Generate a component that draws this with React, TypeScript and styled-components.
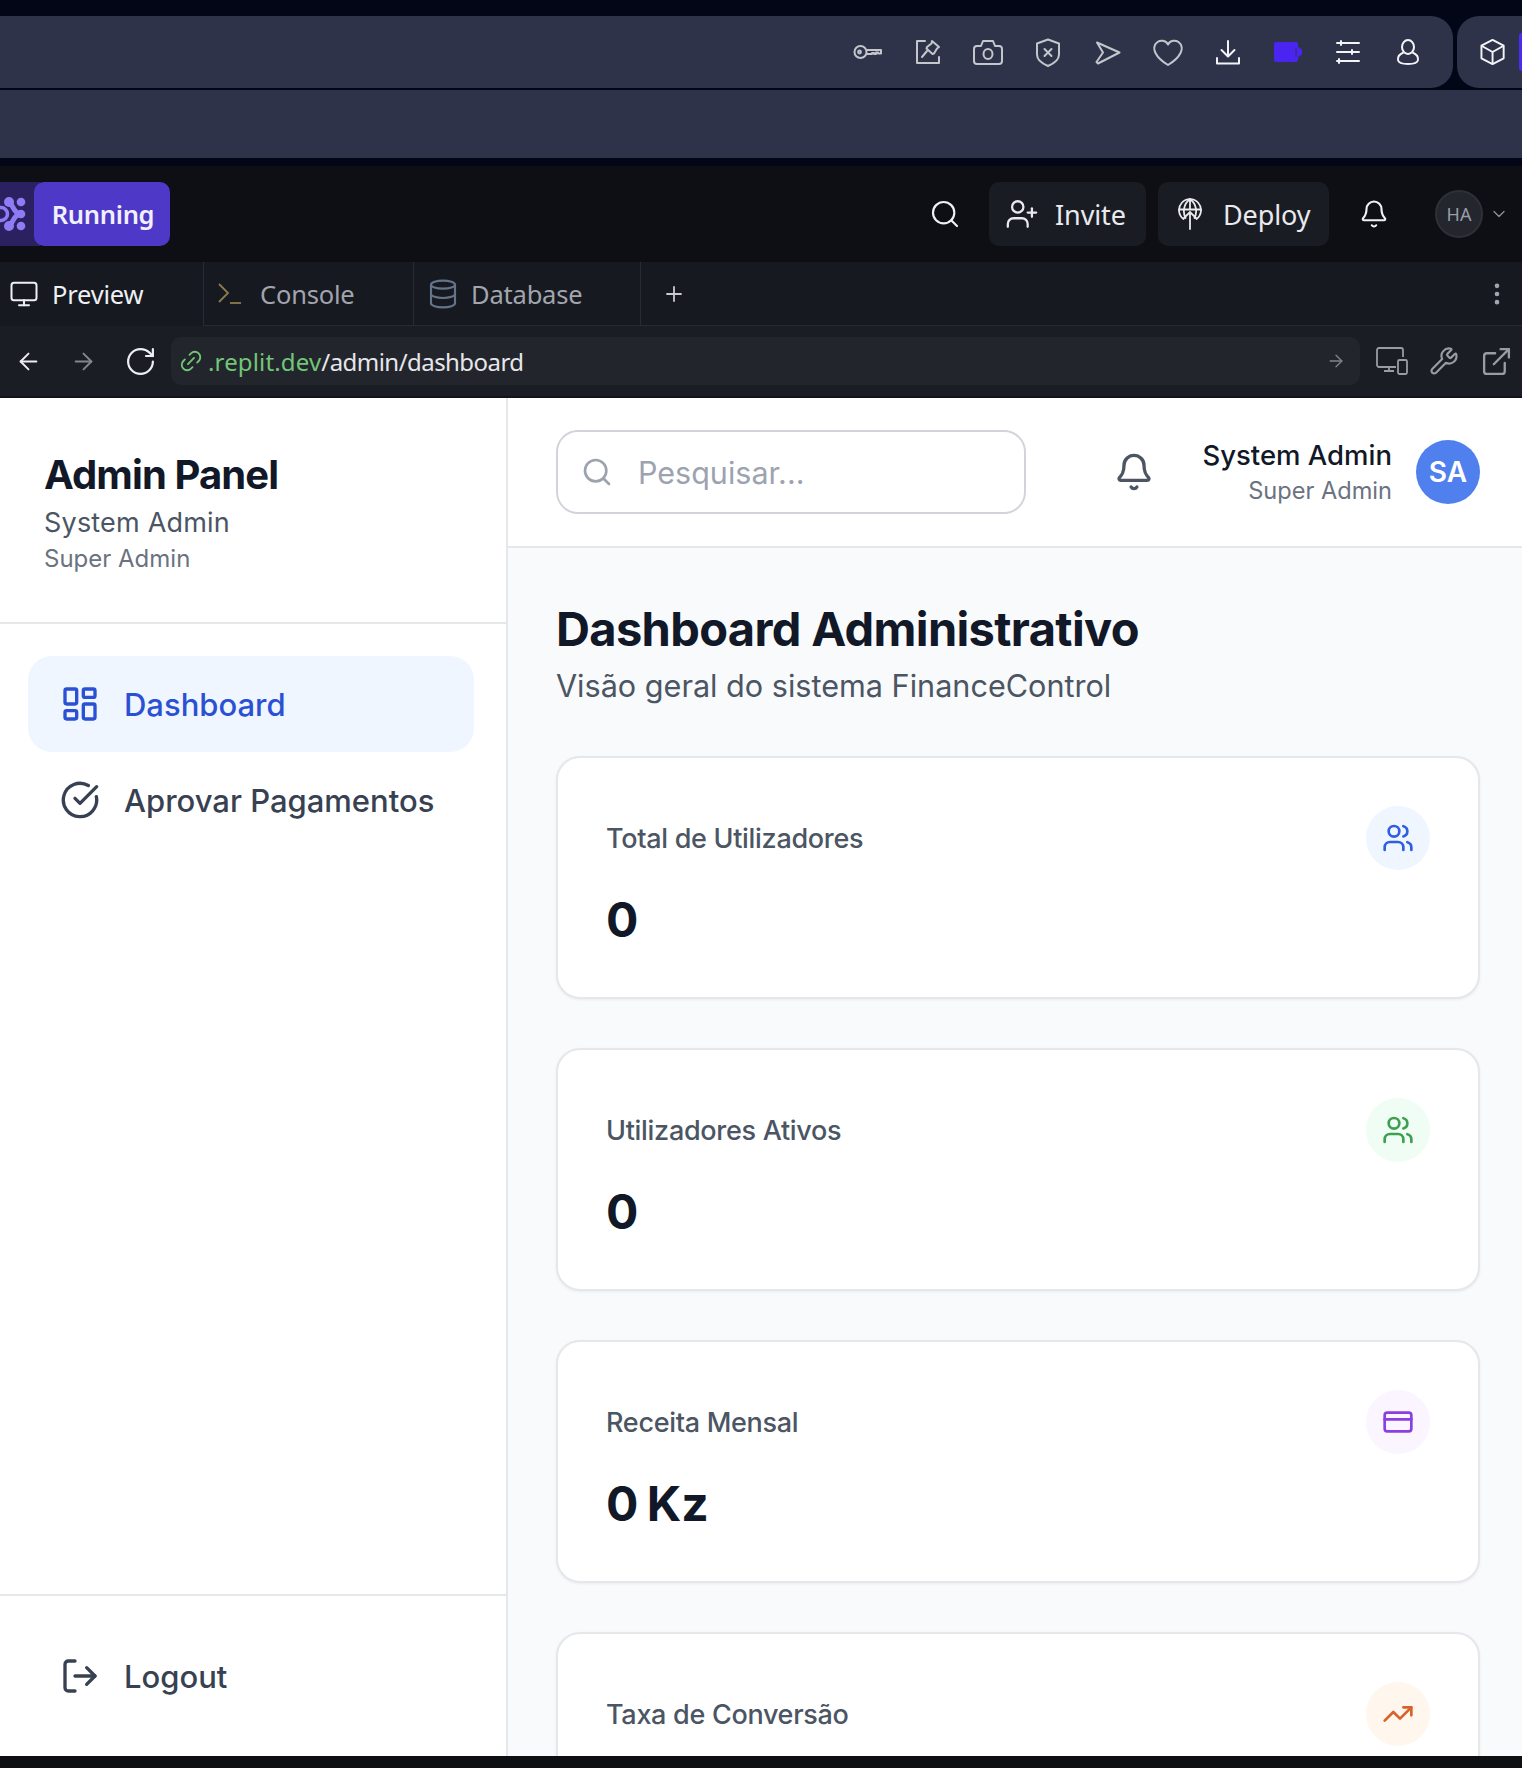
import styled, { createGlobalStyle } from "styled-components";
import {
  ArrowLeft,
  ArrowRight,
  Bell,
  ChevronDown,
  CircleCheckBig,
  CreditCard,
  Database,
  EllipsisVertical,
  ExternalLink,
  LayoutDashboard,
  Link2,
  LogOut,
  Monitor,
  Plus,
  RotateCw,
  Search,
  TrendingUp,
  UserPlus,
  Users,
  Wrench,
} from "lucide-react";

const GlobalStyle = createGlobalStyle`
  html, body {
    margin: 0;
    padding: 0;
    background: #0e0f13;
  }
  * {
    box-sizing: border-box;
  }
`;

const Page = styled.div`
  width: 1522px;
  height: 1768px;
  display: flex;
  flex-direction: column;
  overflow: hidden;
  background: #020617;
  font-family: Inter, "Liberation Sans", sans-serif;
`;

const BrowserChrome = styled.div`
  flex: none;
  padding-top: 16px;
  height: 166px;
  display: flex;
  flex-direction: column;
`;

const ToolbarRow = styled.div`
  height: 72px;
  display: flex;
  gap: 4px;
`;

const Toolbar = styled.div`
  flex: 1;
  display: flex;
  align-items: center;
  justify-content: flex-end;
  padding-right: 15px;
  background: #2e3349;
  border-radius: 0 22px 22px 0;
`;

const ExtensionPanel = styled.div`
  width: 65px;
  display: flex;
  align-items: center;
  background: #2e3349;
  border-radius: 22px 0 0 22px;
  padding-left: 23px;
  gap: 14px;
  color: #f4f4f6;
`;

const ExtensionSliver = styled.div`
  width: 3px;
  height: 38px;
  background: #4a2cf0;
  border-radius: 3px 0 0 3px;
`;

const ToolSlot = styled.div<{ $bright?: boolean }>`
  width: 60px;
  display: flex;
  justify-content: center;
  color: ${(p) => (p.$bright ? "#f4f4f6" : "#c4c6cc")};
`;

const BookmarkBand = styled.div`
  height: 68px;
  margin-top: 2px;
  background: #2e3349;
`;

const ReplitHeader = styled.header`
  flex: none;
  height: 96px;
  display: flex;
  align-items: center;
  background: #0e0f14;
  color: #f0f1f4;
  font-family: "Noto Sans", Roboto, sans-serif;
`;

const LogoChip = styled.div`
  width: 40px;
  height: 64px;
  margin-right: -6px;
  display: flex;
  align-items: center;
  background: #2c2160;
`;

const RunningButton = styled.button`
  width: 136px;
  height: 64px;
  padding: 0 0 0 2px;
  border: none;
  border-radius: 10px;
  background: #4e38c8;
  color: #f2f0fd;
  font: 600 25.5px "Noto Sans", Roboto, sans-serif;
  letter-spacing: -0.3px;
`;

const HeaderSpacer = styled.div`
  flex: 1;
`;

const HeaderSearch = styled.div`
  width: 32px;
  margin-right: 28px;
  display: flex;
  color: #f0f1f4;
`;

const HeaderButton = styled.button<{ $width: number; $pad: number; $gap: number }>`
  height: 64px;
  width: ${(p) => p.$width}px;
  margin-right: 12px;
  padding: 0 0 0 ${(p) => p.$pad}px;
  display: flex;
  align-items: center;
  gap: ${(p) => p.$gap}px;
  border: none;
  border-radius: 10px;
  background: #1a1c23;
  color: #e9eaee;
  font: 400 27px "Noto Sans", Roboto, sans-serif;
  letter-spacing: -0.1px;
`;

const HeaderBell = styled.div`
  margin-left: 18px;
  width: 30px;
  display: flex;
  color: #f0f1f4;
`;

const HeaderAvatar = styled.div`
  width: 48px;
  height: 48px;
  margin-left: 46px;
  display: flex;
  align-items: center;
  justify-content: center;
  border: 2px solid #2e3038;
  border-radius: 50%;
  background: #24262e;
  color: #9a9ca6;
  font-size: 18px;
`;

const HeaderChevron = styled.div`
  width: 20px;
  margin: 0 13px 0 6px;
  display: flex;
  color: #8c8e98;
`;

const TabRow = styled.div`
  flex: none;
  height: 64px;
  display: flex;
  background: #171920;
  font-family: "Noto Sans", Roboto, sans-serif;
`;

const Tab = styled.div<{ $width: number; $gap: number; $active?: boolean }>`
  width: ${(p) => p.$width}px;
  display: flex;
  align-items: center;
  gap: ${(p) => p.$gap}px;
  padding-left: ${(p) => (p.$active ? 9 : 13)}px;
  border-left: ${(p) => (p.$active ? "none" : "1px solid #282b33")};
  border-bottom: 1px solid ${(p) => (p.$active ? "transparent" : "#282b33")};
  color: ${(p) => (p.$active ? "#eef0f3" : "#a2a5ae")};
  font-size: 25.5px;
  letter-spacing: -0.2px;
`;

const TabFiller = styled.div`
  flex: 1;
  display: flex;
  align-items: center;
  justify-content: space-between;
  padding: 0 11px 0 21px;
  border-left: 1px solid #282b33;
  border-bottom: 1px solid #282b33;
  color: #c9cbd1;
`;

const UrlRow = styled.div`
  flex: none;
  height: 72px;
  display: flex;
  align-items: center;
  background: #1b1d24;
  border-bottom: 2px solid #121318;
`;

const NavIcon = styled.div<{ $dim?: boolean; $width: number }>`
  width: ${(p) => p.$width}px;
  display: flex;
  justify-content: center;
  color: ${(p) => (p.$dim ? "#84868e" : "#eceef1")};
`;

const UrlField = styled.div`
  width: 1189px;
  height: 48px;
  margin-right: 6px;
  display: flex;
  align-items: center;
  padding: 0 14px 0 7px;
  border-radius: 10px;
  background: #23252c;
  color: #e6e7eb;
  font: 400 24px "Noto Sans", Roboto, sans-serif;
  letter-spacing: -0.55px;
`;

const UrlLinkIcon = styled(Link2)`
  flex: none;
  color: #72c677;
  transform: rotate(-45deg);
`;

const UrlHost = styled.span`
  margin-left: 4px;
  color: #72c677;
  letter-spacing: 0.15px;
`;

const UrlArrow = styled.div`
  margin-left: auto;
  display: flex;
  color: #82848c;
`;

const UrlTool = styled.div`
  width: 52px;
  display: flex;
  justify-content: center;
  color: #9a9ca4;
`;

const AppFrame = styled.div`
  flex: 1;
  min-height: 0;
  display: flex;
  background: #ffffff;
`;

const Sidebar = styled.aside`
  width: 508px;
  flex: none;
  display: flex;
  flex-direction: column;
  border-right: 2px solid #e5e7eb;
`;

const Brand = styled.div`
  height: 226px;
  flex: none;
  padding: 53px 44px 0;
  border-bottom: 2px solid #e5e7eb;
`;

const BrandTitle = styled.h1`
  margin: 0 0 6px;
  color: #111827;
  font-size: 40px;
  line-height: 48px;
  font-weight: 700;
  letter-spacing: -0.9px;
`;

const BrandUser = styled.div`
  color: #4b5563;
  font-size: 27px;
  line-height: 36px;
  letter-spacing: 0.2px;
`;

const BrandRole = styled.div`
  margin-top: 2px;
  color: #6b7280;
  font-size: 24px;
  line-height: 32px;
`;

const NavList = styled.nav`
  flex: 1;
  padding: 32px 32px 0 28px;
`;

const NavItem = styled.div<{ $active?: boolean }>`
  height: 96px;
  display: flex;
  align-items: center;
  gap: 24px;
  padding-left: 32px;
  border-radius: 24px;
  background: ${(p) => (p.$active ? "#eff6ff" : "transparent")};
  color: ${(p) => (p.$active ? "#2a50d4" : "#374151")};
  font-size: 31px;
  font-weight: 500;
`;

const SidebarFooter = styled.div`
  height: 162px;
  flex: none;
  display: flex;
  align-items: center;
  padding: 0 28px;
  border-top: 2px solid #e5e7eb;
`;

const MainColumn = styled.main`
  flex: 1;
  min-width: 0;
  display: flex;
  flex-direction: column;
  background: #f9fafb;
`;

const TopBar = styled.div`
  height: 150px;
  flex: none;
  display: flex;
  align-items: center;
  padding: 0 42px 0 48px;
  background: #ffffff;
  border-bottom: 2px solid #e5e7eb;
`;

const SearchBox = styled.div`
  width: 470px;
  height: 84px;
  display: flex;
  align-items: center;
  gap: 25px;
  padding-left: 23px;
  border: 2px solid #d1d5db;
  border-radius: 22px;
  color: #9ca3af;
  font-size: 30.5px;
`;

const TopBell = styled.div`
  margin-left: auto;
  margin-right: 48px;
  display: flex;
  color: #4b5563;
`;

const TopUser = styled.div`
  display: flex;
  flex-direction: column;
  align-items: flex-end;
  margin-right: 24px;
`;

const TopUserName = styled.div`
  color: #111827;
  font-size: 27.5px;
  line-height: 38px;
  font-weight: 500;
`;

const TopUserRole = styled.div`
  color: #6b7280;
  font-size: 23.6px;
  line-height: 34px;
`;

const Avatar = styled.div`
  width: 64px;
  height: 64px;
  display: flex;
  align-items: center;
  justify-content: center;
  border-radius: 50%;
  background: #4f80ed;
  color: #ffffff;
  font-size: 28px;
  font-weight: 600;
`;

const Content = styled.div`
  flex: 1;
  min-height: 0;
  overflow: hidden;
  padding: 51px 42px 0 48px;
`;

const PageTitle = styled.h2`
  margin: 0;
  color: #111827;
  font-size: 47px;
  line-height: 60px;
  font-weight: 700;
  letter-spacing: -0.65px;
`;

const PageSubtitle = styled.p`
  margin: 5px 0 0;
  color: #4b5563;
  font-size: 30.6px;
  line-height: 44px;
`;

const CardStack = styled.div`
  margin-top: 48px;
  display: flex;
  flex-direction: column;
  gap: 49px;
`;

const StatCard = styled.section`
  height: 243px;
  flex: none;
  display: flex;
  justify-content: space-between;
  padding: 48px;
  border: 2px solid #e5e7eb;
  border-radius: 24px;
  background: #ffffff;
  box-shadow: 0 1px 3px rgba(0, 0, 0, 0.06);
`;

const StatLabel = styled.div`
  margin-top: 13px;
  color: #4b5563;
  font-size: 27px;
  line-height: 40px;
  font-weight: 500;
  letter-spacing: -0.3px;
`;

const StatValue = styled.div`
  margin-top: 33px;
  color: #111827;
  font-size: 48px;
  line-height: 56px;
  font-weight: 700;
  word-spacing: -3px;
`;

const IconBubble = styled.div<{ $bg: string; $fg: string }>`
  width: 64px;
  height: 64px;
  display: flex;
  align-items: center;
  justify-content: center;
  border-radius: 50%;
  background: ${(p) => p.$bg};
  color: ${(p) => p.$fg};
`;

const BottomStrip = styled.div`
  height: 12px;
  flex: none;
  background: #0e0f13;
`;

const KeyIcon = () => (
  <svg width="30" height="18" viewBox="0 0 30 18" fill="none" stroke="currentColor" strokeWidth="2" strokeLinejoin="round">
    <circle cx="7.5" cy="9" r="6" />
    <circle cx="6.5" cy="9" r="1.4" />
    <path d="M13.5 7h14.5v3.5h-3v-1h-2v1.500h-2v-1h-2v1h-5.500" />
  </svg>
);

const PinNoteIcon = () => (
  <svg width="26" height="26" viewBox="0 0 26 26" fill="none" stroke="currentColor" strokeWidth="2" strokeLinejoin="round" strokeLinecap="round">
    <path d="M10 2H2v22h22v-6" />
    <path d="M17 2l7 6-2 1.500-3 5-1.500.500-6-5.500.500-1.500 4.500-3.500z" />
    <path d="M12 12l-5 6" />
  </svg>
);

const CameraIcon = () => (
  <svg width="30" height="26" viewBox="0 0 30 26" fill="none" stroke="currentColor" strokeWidth="2" strokeLinejoin="round">
    <path d="M4 7h4l2-5h10l2 5h4a3 3 0 0 1 3 3v12a3 3 0 0 1-3 3H4a3 3 0 0 1-3-3V10a3 3 0 0 1 3-3z" />
    <ellipse cx="15" cy="15" rx="4.500" ry="5" />
  </svg>
);

const ShieldXIcon = () => (
  <svg width="26" height="29" viewBox="0 0 26 29" fill="none" stroke="currentColor" strokeWidth="2" strokeLinejoin="round" strokeLinecap="round">
    <path d="M13 1.500 24 5.500v11c0 5-5 9-11 11.500C7 25.500 2 21.500 2 16.500v-11z" />
    <path d="M9.500 11l7 7M16.500 11l-7 7" />
  </svg>
);

const SendIcon = () => (
  <svg width="26" height="25" viewBox="0 0 26 25" fill="none" stroke="currentColor" strokeWidth="2" strokeLinejoin="round">
    <path d="M2 2.500 24.500 12.500 3 23.500 1.500 22 8 12.500z" />
  </svg>
);

const HeartIcon = () => (
  <svg width="30" height="27" viewBox="0 0 30 27" fill="none" stroke="currentColor" strokeWidth="2" strokeLinejoin="round">
    <path d="M15 5.500C12.500 1 7.500 1 4.500 3 1 5.500.500 10 2.500 14c2.500 5 7.500 9 12.500 12 5-3 10-7 12.500-12 2-4 1.500-8.500-2-11-3-2-8-2-10.500 2.500z" />
  </svg>
);

const DownloadIcon = () => (
  <svg width="26" height="25" viewBox="0 0 26 25" fill="none" stroke="currentColor" strokeWidth="2" strokeLinejoin="round" strokeLinecap="round">
    <path d="M13 1v15M6.500 10l6.500 6.500 6.500-6.500" />
    <path d="M2 18v5.500h22V18" />
  </svg>
);

const BatteryIcon = () => (
  <svg width="28" height="20" viewBox="0 0 28 20" fill="none">
    <path d="M2.500 0H22a2 2 0 0 1 2 2v3l2.500 1.500a2 2 0 0 1 1.500 2v3a2 2 0 0 1-1.500 2L24 15v3a2 2 0 0 1-2 2H2.500A2.500 2.500 0 0 1 0 17.500v-15A2.500 2.500 0 0 1 2.500 0z" fill="#4a24f0" />
    <path d="M22 6v9" stroke="#2e3349" strokeWidth="1" />
  </svg>
);

const SlidersIcon = () => (
  <svg width="26" height="24" viewBox="0 0 26 24" fill="none" stroke="currentColor" strokeWidth="2" strokeLinecap="round">
    <path d="M2 3h22M2 12h22M2 21h22" />
    <path d="M6 1v4M17 10v4M4 19v4" />
  </svg>
);

const PersonIcon = () => (
  <svg width="24" height="26" viewBox="0 0 24 26" fill="none" stroke="currentColor" strokeWidth="2">
    <ellipse cx="12" cy="8" rx="6" ry="7" />
    <path d="M7.500 13.500C4 15 1.500 17.500 2 21c.3 2.500 3 4 10 4s9.700-1.500 10-4c.5-3.500-2-6-5.500-7.500" />
  </svg>
);

const CubeIcon = () => (
  <svg width="26" height="28" viewBox="0 0 26 28" fill="none" stroke="currentColor" strokeWidth="2" strokeLinejoin="round">
    <path d="M13 1.500 24.500 7.500v13L13 26.500 1.500 20.500v-13z" />
    <path d="M1.500 7.500 13 14l11.500-6.500M13 14v12.500" />
  </svg>
);

const LogoMark = () => (
  <svg width="28" height="40" viewBox="0 0 28 40" fill="#8f7cf5" stroke="none">
    <circle cx="21" cy="8" r="4.300" />
    <circle cx="21" cy="20" r="4.300" />
    <circle cx="21" cy="32" r="4.300" />
    <circle cx="9" cy="8" r="5" />
    <circle cx="9" cy="32" r="5" />
    <path d="M8 8c6 2 4 10 12 12M8 32c6-2 4-10 12-12" fill="none" stroke="#8f7cf5" strokeWidth="5" />
    <circle cx="1" cy="20" r="6.500" fill="none" stroke="#8f7cf5" strokeWidth="3.500" />
  </svg>
);

const PromptIcon = () => (
  <svg width="25" height="24" viewBox="0 0 25 24" fill="none" strokeWidth="1.800" stroke="#8b7b4f">
    <path d="M2 2l9 9-9 9" />
    <path d="M13 21h11" />
  </svg>
);

const DeployGlobeIcon = () => (
  <svg width="24" height="32" viewBox="0 0 24 32" fill="none" stroke="currentColor" strokeWidth="1.800" strokeLinecap="round">
    <path d="M5.500 21A11 11 0 1 1 18.500 21" />
    <path d="M1 11.500h22M7.500 20C4.500 14 5.500 6 12 1c6.500 5 7.500 13 4.500 19M12 1v10" />
    <path d="M12 31V14M6 20l6-6 6 6" />
  </svg>
);

const DeviceIcon = () => (
  <svg width="32" height="28" viewBox="0 0 32 28" fill="none" stroke="currentColor" strokeWidth="1.800" strokeLinejoin="round">
    <path d="M20 20H3a2 2 0 0 1-2-2V3a2 2 0 0 1 2-2h22a2 2 0 0 1 2 2v7" />
    <path d="M13 20v4M8 24h10" />
    <rect x="22" y="13" width="9" height="14" rx="1.500" />
  </svg>
);

const stats = [
  { label: "Total de Utilizadores", value: "0", bg: "#eff6ff", fg: "#2f5fe0", icon: <Users size={32} strokeWidth={2} /> },
  { label: "Utilizadores Ativos", value: "0", bg: "#f0fdf4", fg: "#3f9f50", icon: <Users size={32} strokeWidth={2} /> },
  { label: "Receita Mensal", value: "0 Kz", bg: "#faf5ff", fg: "#8a3fe0", icon: <CreditCard size={32} strokeWidth={2} /> },
  { label: "Taxa de Conversão", value: "", bg: "#fff7ed", fg: "#d9622b", icon: <TrendingUp size={32} strokeWidth={2} /> },
];

export default function App() {
  return (
    <Page>
      <GlobalStyle />
      <BrowserChrome>
        <ToolbarRow>
          <Toolbar>
            <ToolSlot><KeyIcon /></ToolSlot>
            <ToolSlot><PinNoteIcon /></ToolSlot>
            <ToolSlot><CameraIcon /></ToolSlot>
            <ToolSlot><ShieldXIcon /></ToolSlot>
            <ToolSlot><SendIcon /></ToolSlot>
            <ToolSlot><HeartIcon /></ToolSlot>
            <ToolSlot $bright><DownloadIcon /></ToolSlot>
            <ToolSlot><BatteryIcon /></ToolSlot>
            <ToolSlot $bright><SlidersIcon /></ToolSlot>
            <ToolSlot $bright><PersonIcon /></ToolSlot>
          </Toolbar>
          <ExtensionPanel>
            <CubeIcon />
            <ExtensionSliver />
          </ExtensionPanel>
        </ToolbarRow>
        <BookmarkBand />
      </BrowserChrome>

      <ReplitHeader>
        <LogoChip><LogoMark /></LogoChip>
        <RunningButton>Running</RunningButton>
        <HeaderSpacer />
        <HeaderSearch><Search size={32} strokeWidth={1.6} /></HeaderSearch>
        <HeaderButton $width={157} $pad={16} $gap={16}>
          <UserPlus size={34} strokeWidth={1.6} />
          Invite
        </HeaderButton>
        <HeaderButton $width={171} $pad={20} $gap={21}>
          <DeployGlobeIcon />
          <span>Deploy</span>
        </HeaderButton>
        <HeaderBell><Bell size={30} strokeWidth={1.7} /></HeaderBell>
        <HeaderAvatar>HA</HeaderAvatar>
        <HeaderChevron><ChevronDown size={20} strokeWidth={1.6} /></HeaderChevron>
      </ReplitHeader>

      <TabRow>
        <Tab $width={203} $gap={13} $active>
          <Monitor size={30} strokeWidth={1.6} />
          Preview
        </Tab>
        <Tab $width={210} $gap={18}>
          <PromptIcon />
          Console
        </Tab>
        <Tab $width={227} $gap={12}>
          <Database size={32} strokeWidth={1.6} color="#64748b" />
          Database
        </Tab>
        <TabFiller>
          <Plus size={24} strokeWidth={1.8} />
          <EllipsisVertical size={28} strokeWidth={2} color="#a2a5ae" />
        </TabFiller>
      </TabRow>

      <UrlRow>
        <NavIcon $width={56}><ArrowLeft size={27} strokeWidth={1.7} /></NavIcon>
        <NavIcon $width={54} $dim><ArrowRight size={27} strokeWidth={1.7} /></NavIcon>
        <NavIcon $width={61}><RotateCw size={33} strokeWidth={1.6} /></NavIcon>
        <UrlField>
          <UrlLinkIcon size={26} strokeWidth={1.7} />
          <UrlHost>.replit.dev</UrlHost>/admin/dashboard
          <UrlArrow><ArrowRight size={20} strokeWidth={1.6} /></UrlArrow>
        </UrlField>
        <UrlTool><DeviceIcon /></UrlTool>
        <UrlTool><Wrench size={30} strokeWidth={1.7} /></UrlTool>
        <UrlTool><ExternalLink size={33} strokeWidth={1.7} /></UrlTool>
      </UrlRow>

      <AppFrame>
        <Sidebar>
          <Brand>
            <BrandTitle>Admin Panel</BrandTitle>
            <BrandUser>System Admin</BrandUser>
            <BrandRole>Super Admin</BrandRole>
          </Brand>
          <NavList>
            <NavItem $active>
              <LayoutDashboard size={40} strokeWidth={2} />
              Dashboard
            </NavItem>
            <NavItem>
              <CircleCheckBig size={40} strokeWidth={2} />
              Aprovar Pagamentos
            </NavItem>
          </NavList>
          <SidebarFooter>
            <NavItem>
              <LogOut size={40} strokeWidth={2} />
              Logout
            </NavItem>
          </SidebarFooter>
        </Sidebar>

        <MainColumn>
          <TopBar>
            <SearchBox>
              <Search size={32} strokeWidth={2} />
              Pesquisar...
            </SearchBox>
            <TopBell><Bell size={40} strokeWidth={2} /></TopBell>
            <TopUser>
              <TopUserName>System Admin</TopUserName>
              <TopUserRole>Super Admin</TopUserRole>
            </TopUser>
            <Avatar>SA</Avatar>
          </TopBar>
          <Content>
            <PageTitle>Dashboard Administrativo</PageTitle>
            <PageSubtitle>Visão geral do sistema FinanceControl</PageSubtitle>
            <CardStack>
              {stats.map((s) => (
                <StatCard key={s.label}>
                  <div>
                    <StatLabel>{s.label}</StatLabel>
                    {s.value && <StatValue>{s.value}</StatValue>}
                  </div>
                  <IconBubble $bg={s.bg} $fg={s.fg}>{s.icon}</IconBubble>
                </StatCard>
              ))}
            </CardStack>
          </Content>
        </MainColumn>
      </AppFrame>
      <BottomStrip />
    </Page>
  );
}
